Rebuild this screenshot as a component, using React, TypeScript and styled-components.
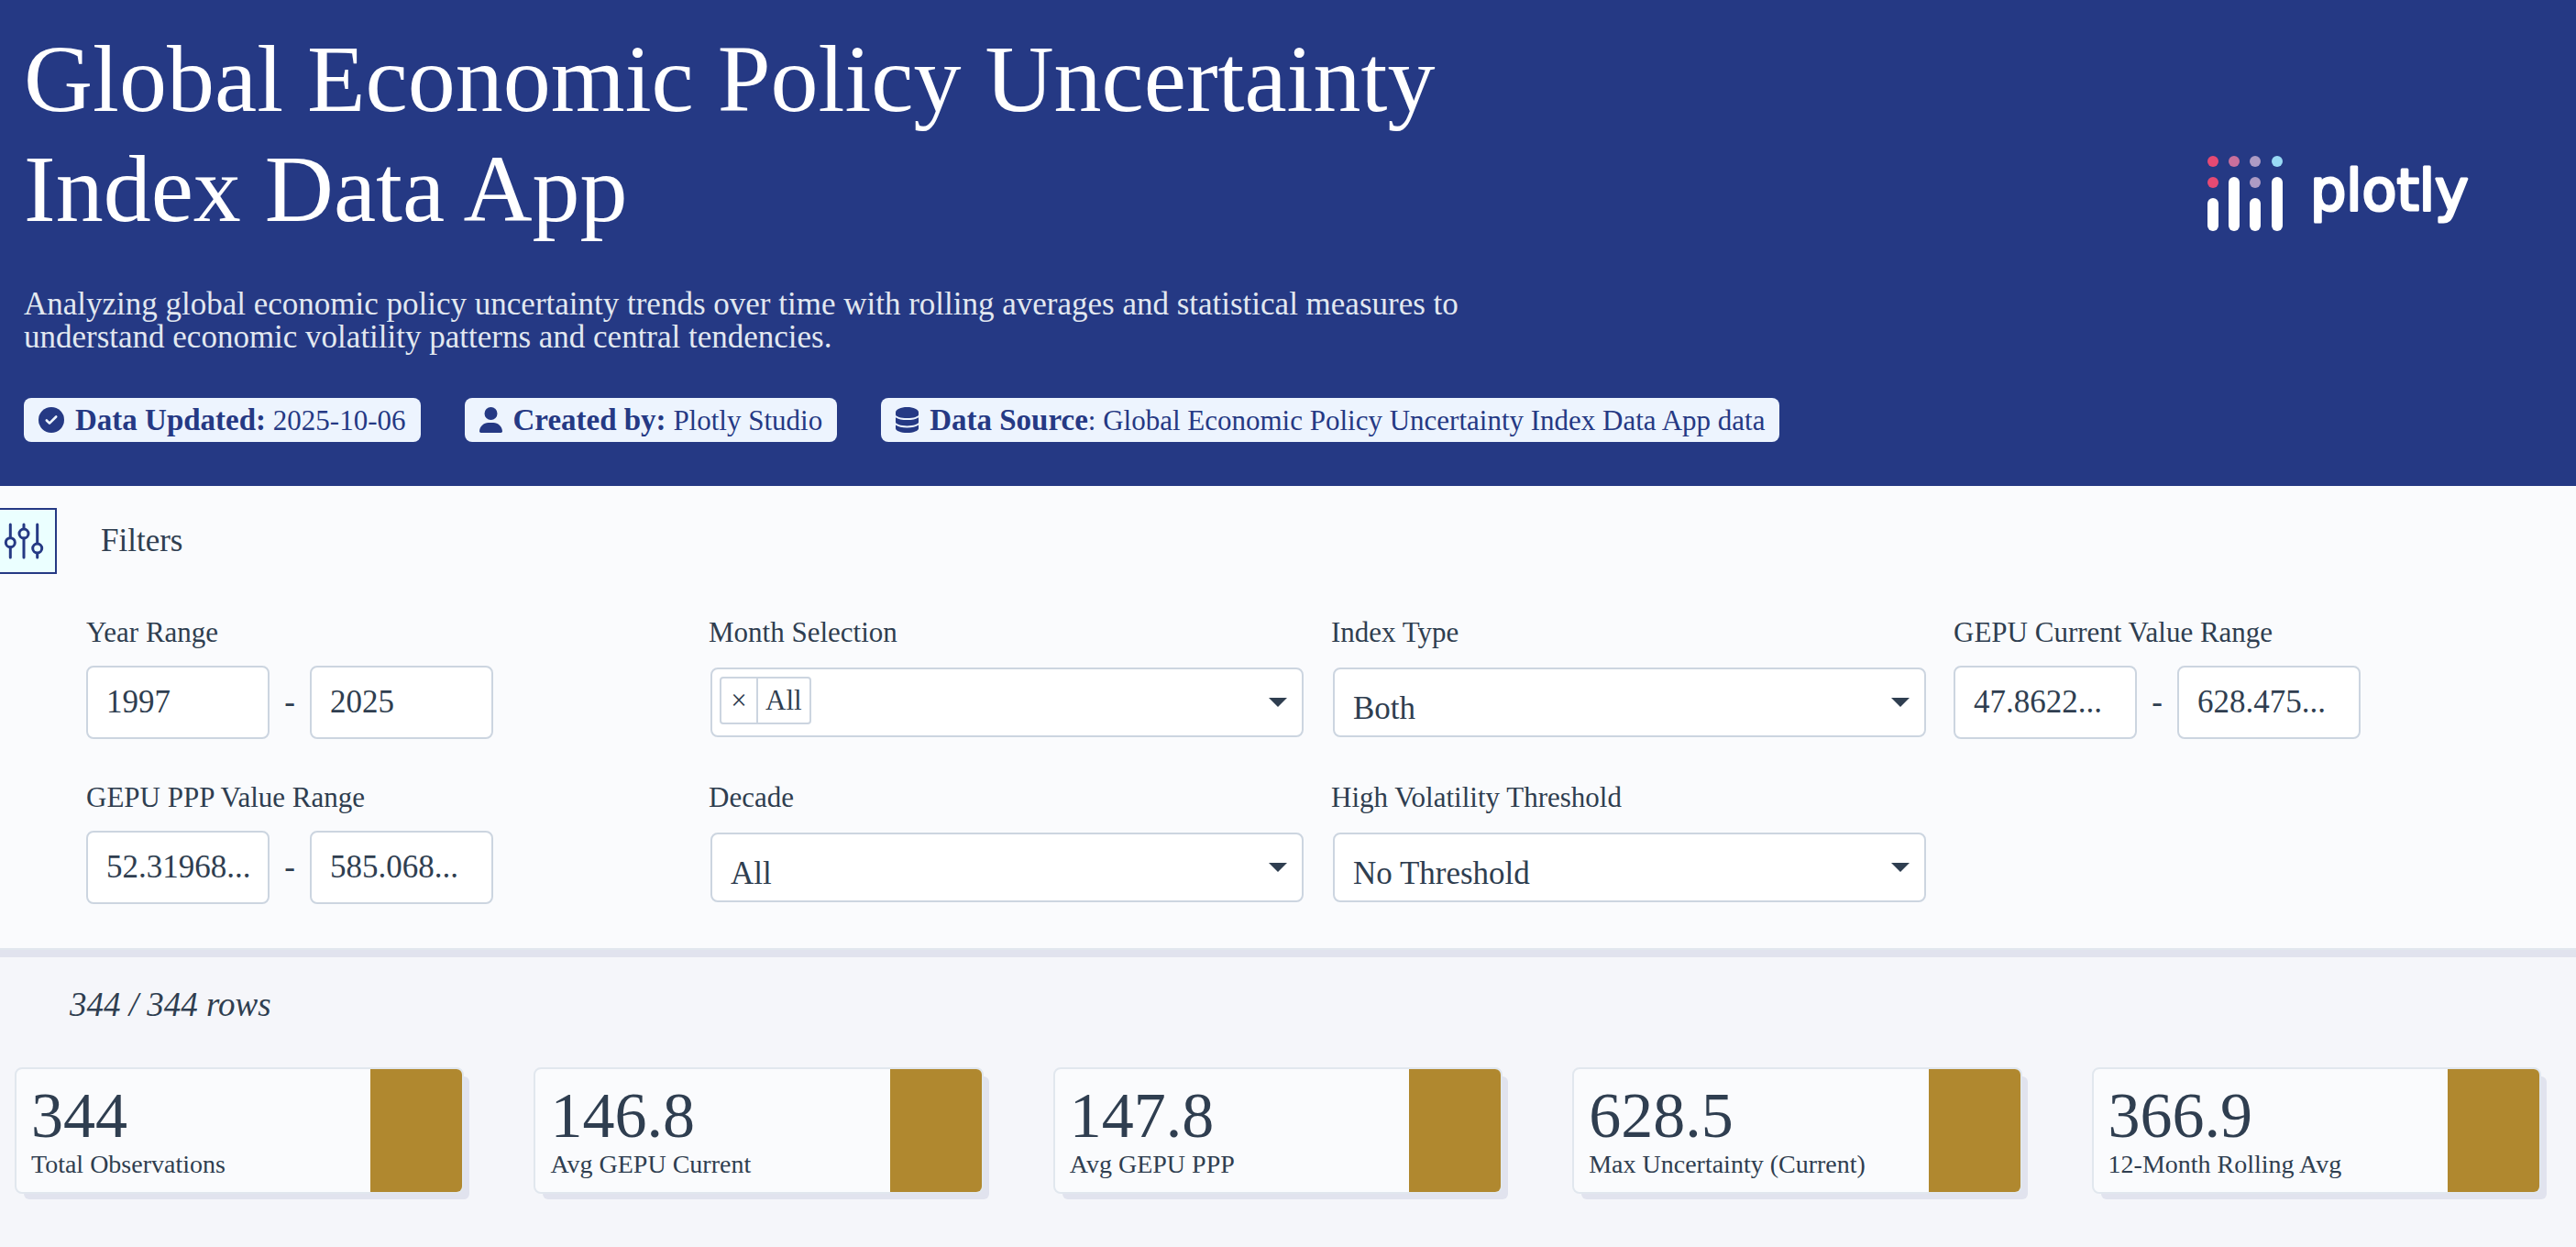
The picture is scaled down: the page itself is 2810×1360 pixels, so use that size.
import React from "react";
import styled, { createGlobalStyle } from "styled-components";

const color = {
  navy: "#253984",
  ink: "#2f3e50",
  line: "#ccd5e0",
  panel: "#fafbfd",
  page: "#f5f6fa",
  edge: "#e1e7ee",
  shade: "#e1e3ee",
  chip: "#edf4fe",
  gold: "#b0882f",
};

const serif = `"Liberation Serif", "Times New Roman", serif`;

const GlobalStyle = createGlobalStyle`
  * { box-sizing: border-box; }
  body { margin: 0; background: ${color.page}; color: ${color.ink}; font-family: ${serif}; }
  button, input, select { font-family: inherit; color: inherit; }
`;

/* ---------- header ---------- */

const Header = styled.header`
  background: ${color.navy};
  padding: 26px 26px 48px;
`;

const HeaderTop = styled.div`
  display: flex;
  align-items: center;
  justify-content: space-between;
  padding-right: 84px;
`;

const Intro = styled.div`
  max-width: 1640px;
`;

const Title = styled.h1`
  margin: 0;
  font-size: 104px;
  font-weight: 400;
  line-height: 120px;
  color: #fff;
`;

const Description = styled.p`
  margin: 48px 0 0;
  font-size: 35px;
  line-height: 36px;
  color: #e2e8f0;
`;

const Chips = styled.div`
  display: flex;
  flex-wrap: wrap;
  gap: 48px;
  margin-top: 48px;
`;

const Chip = styled.div`
  display: flex;
  align-items: center;
  gap: 12px;
  height: 48px;
  padding: 0 16px;
  border-radius: 8px;
  background: ${color.chip};
  color: ${color.navy};
  font-size: 31px;
  line-height: 36px;
  white-space: nowrap;
`;

const ChipName = styled.strong`
  font-size: 33px;
`;

const ChipIcon = styled.svg`
  display: block;
  height: 28px;
  fill: currentColor;
`;

const LogoSvg = styled.svg`
  display: block;
  flex: none;
  margin-top: 10px;
`;

const LogoText = styled.text`
  font-family: "DejaVu Sans", sans-serif;
  font-size: 62px;
  fill: #fff;
  stroke: #fff;
  stroke-width: 3px;
  stroke-linejoin: round;
`;

function Logo() {
  const dots = [
    [6, 6, "#e64a73"],
    [29, 6, "#c9709c"],
    [52, 6, "#ad9bc4"],
    [76, 6, "#99daf5"],
    [6, 29, "#e64a73"],
    [52, 29, "#ad9bc4"],
  ] as const;
  const bars = [
    [0, 46],
    [23, 23],
    [46, 46],
    [70, 23],
  ] as const;
  return (
    <LogoSvg width="292" height="82" viewBox="0 0 292 82" role="img" aria-label="plotly">
      {dots.map(([x, y, c]) => (
        <circle key={`${x}-${y}`} cx={x} cy={y} r="6" fill={c} />
      ))}
      {bars.map(([x, y]) => (
        <rect key={x} x={x} y={y} width="12" height={82 - y} rx="6" fill="#fff" />
      ))}
      <LogoText x="112" y="59">plotly</LogoText>
    </LogoSvg>
  );
}

const CheckIcon = () => (
  <ChipIcon viewBox="0 0 28 28" width="28" aria-hidden="true">
    <circle cx="14" cy="14" r="14" />
    <path d="M8.800 14.500l3.200 3.200 7.200-7.200" fill="none" stroke={color.chip} strokeWidth="2.600" strokeLinecap="round" strokeLinejoin="round" />
  </ChipIcon>
);

const UserIcon = () => (
  <ChipIcon viewBox="0 0 25 28" width="25" aria-hidden="true">
    <circle cx="12.500" cy="7" r="7" />
    <path d="M9.800 17h5.400c5.200 0 9.300 4 9.800 9.200.1 1-.6 1.800-1.600 1.800H1.600C.6 28-.1 27.200 0 26.200.5 21 4.600 17 9.800 17z" />
  </ChipIcon>
);

const DatabaseIcon = () => (
  <ChipIcon viewBox="0 0 25 28" width="25" aria-hidden="true">
    <path d="M0 5.500C0 2.500 5.500 0 12.500 0S25 2.500 25 5.500v2.700c0 2-5.500 3.900-12.500 3.900S0 10.200 0 8.200z" />
    <path d="M0 11.200c2.600 2 7.200 2.900 12.500 2.900s9.900-.9 12.500-2.900v5.300c0 2-5.500 3.900-12.500 3.900S0 18.500 0 16.500z" />
    <path d="M0 19.500c2.600 2 7.200 2.900 12.500 2.900s9.900-.9 12.500-2.900v3.700c0 2.600-5.500 4.800-12.500 4.800S0 25.800 0 23.200z" />
  </ChipIcon>
);

/* ---------- filters ---------- */

const Filters = styled.section`
  background: ${color.panel};
  border-bottom: 2px solid ${color.edge};
  box-shadow: 0 8px 0 ${color.shade};
  padding: 24px 0 48px;
`;

const FiltersHead = styled.div`
  display: flex;
  align-items: center;
  gap: 48px;
  margin-left: -10px;
`;

const ToggleButton = styled.button`
  display: grid;
  place-items: center;
  width: 72px;
  height: 72px;
  padding: 0;
  border: 2px solid ${color.navy};
  background: #ebffff;
  color: ${color.navy};
`;

const FiltersTitle = styled.h2`
  margin: 0;
  font-size: 35px;
  font-weight: 400;
  line-height: 40px;
`;

const FilterGrid = styled.div`
  display: grid;
  grid-template-columns: repeat(4, minmax(0, 1fr));
  gap: 48px 30px;
  padding: 48px 30px 0 94px;
`;

const Field = styled.div`
  display: flex;
  flex-direction: column;
  gap: 20px;
`;

const FieldLabel = styled.label`
  font-size: 31px;
  line-height: 32px;
`;

const RangeRow = styled.div`
  display: flex;
  align-items: center;
  font-size: 35px;
`;

const RangeInput = styled.input`
  width: 200px;
  height: 80px;
  padding: 0 20px;
  border: 2px solid ${color.line};
  border-radius: 8px;
  background: #fff;
  font-size: 35px;
`;

const Dash = styled.span`
  width: 44px;
  text-align: center;
`;

const PickerWrap = styled.div`
  display: grid;
  padding: 2px 0 2px 2px;
  align-items: center;
`;

const Select = styled.select`
  grid-area: 1 / 1;
  width: 100%;
  height: 76px;
  padding: 12px 60px 0 20px;
  border: 2px solid ${color.line};
  border-radius: 8px;
  background: #fff;
  font-size: 35px;
  appearance: none;
`;

const MultiBox = styled.div`
  display: flex;
  align-items: flex-start;
  grid-area: 1 / 1;
  height: 76px;
  padding: 8px;
  border: 2px solid ${color.line};
  border-radius: 8px;
  background: #fff;
`;

const Tag = styled.span`
  display: flex;
  align-items: stretch;
  height: 52px;
  border: 2px solid ${color.line};
  border-radius: 4px;
  font-size: 31px;
  line-height: 48px;
`;

const TagRemove = styled.button`
  display: grid;
  place-items: center;
  width: 40px;
  padding: 0;
  border: 0;
  border-right: 2px solid ${color.line};
  background: none;
  font-size: 31px;
`;

const TagText = styled.span`
  padding: 0 8px;
`;

const SearchInput = styled.input`
  flex: 1;
  min-width: 0;
  height: 52px;
  padding: 0 10px;
  border: 0;
  background: none;
  font-size: 31px;
  outline: none;
`;

const Arrow = styled.svg`
  grid-area: 1 / 1;
  justify-self: end;
  margin-right: 18px;
  pointer-events: none;
`;

const Caret = () => (
  <Arrow width="20" height="10" viewBox="0 0 20 10" aria-hidden="true">
    <path d="M0 0h20L10 10z" fill={color.ink} />
  </Arrow>
);

function RangeField({ id, label, from, to }: { id: string; label: string; from: string; to: string }) {
  return (
    <Field>
      <FieldLabel htmlFor={id}>{label}</FieldLabel>
      <RangeRow>
        <RangeInput id={id} defaultValue={from} />
        <Dash>-</Dash>
        <RangeInput aria-label={`${label} maximum`} defaultValue={to} />
      </RangeRow>
    </Field>
  );
}

function SelectField({ id, label, value }: { id: string; label: string; value: string }) {
  return (
    <Field>
      <FieldLabel htmlFor={id}>{label}</FieldLabel>
      <PickerWrap>
        <Select id={id} defaultValue={value}>
          <option>{value}</option>
        </Select>
        <Caret />
      </PickerWrap>
    </Field>
  );
}

/* ---------- results ---------- */

const Results = styled.main`
  padding: 40px 38px 48px 16px;
`;

const RowCount = styled.p`
  margin: 0 0 48px 60px;
  font-size: 37px;
  font-style: italic;
  line-height: 40px;
`;

const Cards = styled.div`
  display: grid;
  grid-template-columns: repeat(5, minmax(0, 1fr));
  gap: 76px;
`;

const Card = styled.article`
  display: flex;
  justify-content: space-between;
  height: 138px;
  overflow: hidden;
  border: 2px solid ${color.edge};
  border-radius: 8px;
  background: ${color.panel};
  box-shadow: 8px 8px 0 -2px ${color.shade};
`;

const CardText = styled.div`
  padding: 14px 0 0 16px;
  white-space: nowrap;
`;

const CardValue = styled.div`
  font-size: 70px;
  line-height: 74px;
`;

const CardLabel = styled.div`
  font-size: 28px;
  line-height: 32px;
`;

const CardAccent = styled.div`
  width: 100px;
  background: ${color.gold};
`;

const stats = [
  ["344", "Total Observations"],
  ["146.8", "Avg GEPU Current"],
  ["147.8", "Avg GEPU PPP"],
  ["628.5", "Max Uncertainty (Current)"],
  ["366.9", "12-Month Rolling Avg"],
];

export default function App() {
  return (
    <>
      <GlobalStyle />
      <Header>
        <HeaderTop>
          <Intro>
            <Title>Global Economic Policy Uncertainty Index Data App</Title>
            <Description>
              Analyzing global economic policy uncertainty trends over time with rolling averages and statistical measures to
              understand economic volatility patterns and central tendencies.
            </Description>
          </Intro>
          <Logo />
        </HeaderTop>
        <Chips>
          <Chip>
            <CheckIcon />
            <span><ChipName>Data Updated:</ChipName> 2025-10-06</span>
          </Chip>
          <Chip>
            <UserIcon />
            <span><ChipName>Created by:</ChipName> Plotly Studio</span>
          </Chip>
          <Chip>
            <DatabaseIcon />
            <span><ChipName>Data Source</ChipName>: Global Economic Policy Uncertainty Index Data App data</span>
          </Chip>
        </Chips>
      </Header>

      <Filters>
        <FiltersHead>
          <ToggleButton aria-label="Toggle filters">
            <svg width="44" height="40" viewBox="0 0 44 40" fill="none" stroke="currentColor" strokeWidth="3" strokeLinecap="round">
              <path d="M7.300 2v14M7.300 27v11M22 2v4M22 17v21M36.700 2v20M36.700 34v4" />
              <circle cx="7.300" cy="21.700" r="5" />
              <circle cx="22" cy="12" r="5" />
              <circle cx="36.700" cy="28" r="5" />
            </svg>
          </ToggleButton>
          <FiltersTitle>Filters</FiltersTitle>
        </FiltersHead>
        <FilterGrid>
          <RangeField id="year" label="Year Range" from="1997" to="2025" />
          <Field>
            <FieldLabel htmlFor="month">Month Selection</FieldLabel>
            <PickerWrap>
              <MultiBox>
                <Tag>
                  <TagRemove aria-label="Remove All">×</TagRemove>
                  <TagText>All</TagText>
                </Tag>
                <SearchInput id="month" />
              </MultiBox>
              <Caret />
            </PickerWrap>
          </Field>
          <SelectField id="index" label="Index Type" value="Both" />
          <RangeField id="current" label="GEPU Current Value Range" from="47.8622..." to="628.475..." />
          <RangeField id="ppp" label="GEPU PPP Value Range" from="52.31968..." to="585.068..." />
          <SelectField id="decade" label="Decade" value="All" />
          <SelectField id="threshold" label="High Volatility Threshold" value="No Threshold" />
        </FilterGrid>
      </Filters>

      <Results>
        <RowCount>344 / 344 rows</RowCount>
        <Cards>
          {stats.map(([value, label]) => (
            <Card key={label}>
              <CardText>
                <CardValue>{value}</CardValue>
                <CardLabel>{label}</CardLabel>
              </CardText>
              <CardAccent />
            </Card>
          ))}
        </Cards>
      </Results>
    </>
  );
}
